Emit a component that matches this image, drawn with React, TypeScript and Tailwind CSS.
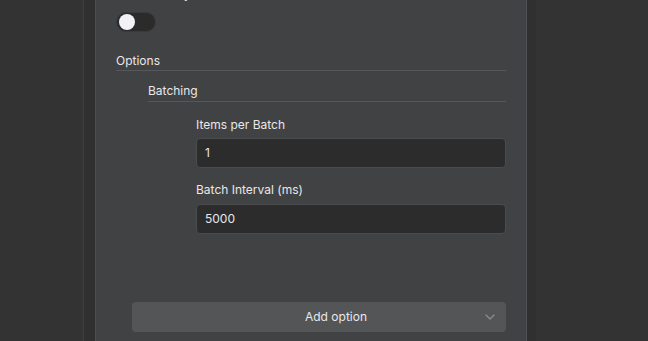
import React from "react";

function Chevron() {
  return (
    <svg width="12" height="12" viewBox="0 0 12 12" fill="none">
      <path d="M2 4l4 4 4-4" stroke="#8b8c8f" strokeWidth="1.3" strokeLinecap="round" strokeLinejoin="round" />
    </svg>
  );
}

export default function App() {
  return (
    <div
      className="flex h-[341px] w-[648px] overflow-hidden bg-[#333333] text-[12px] text-[#e8e8ea]"
      style={{ fontFamily: "Inter, 'Noto Sans', sans-serif" }}
    >
      <div className="w-[83px] shrink-0" />
      <div className="w-[13px] shrink-0 border-l border-r border-l-[#3e3e3e] border-r-[#4c4d50] bg-[#303030]" />
      <div className="flex w-[431px] shrink-0 flex-col border-r border-[#505154] bg-[#414244] px-5">
        <div className="-mt-[15px] h-[17px] leading-[17px]">Execute Only</div>
        <div className="mt-[10px] flex h-[20px] w-[40px] items-center rounded-full border border-[#3a3a3c] bg-[#2b2b2b] px-[2px]">
          <div className="h-[16px] w-[16px] rounded-full bg-[#f1f1f6]" />
        </div>
        <div className="mt-[19px] border-b border-[#565759] pb-[0px] leading-[19px]">Options</div>
        <div className="ml-8 mt-[10px] border-b border-[#565759] pb-[1px] leading-[19px]">Batching</div>
        <div className="ml-20 mt-[14px] flex flex-col">
          <div className="leading-[18px]">Items per Batch</div>
          <div className="mt-[4px] flex h-[30px] items-center rounded-[4px] border border-[#4b4c4e] bg-[#2c2c2c] px-2">1</div>
          <div className="mt-[13px] leading-[18px]">Batch Interval (ms)</div>
          <div className="mt-[5px] flex h-[30px] items-center rounded-[4px] border border-[#4b4c4e] bg-[#2c2c2c] px-2">5000</div>
        </div>
        <div className="ml-4 mt-[68px] flex h-[30px] items-center rounded-[4px] bg-[#545557] pl-[56px] pr-[10px]">
          <div className="flex-1 text-center">Add option</div>
          <Chevron />
        </div>
      </div>
      <div className="w-[9px] shrink-0 bg-[#303030]" />
      <div className="flex-1" />
    </div>
  );
}
